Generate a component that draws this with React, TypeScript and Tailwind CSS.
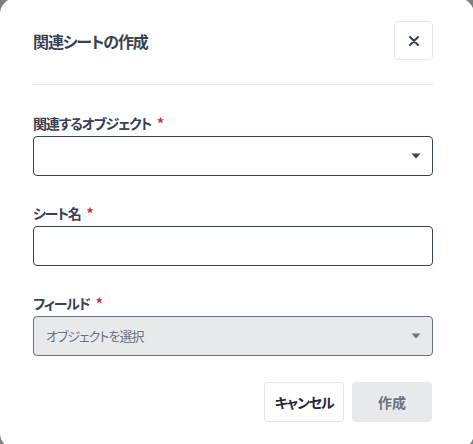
const jp = "font-['Noto_Sans_CJK_JP',sans-serif] [font-feature-settings:'palt']";

function Caret({ color }: { color: string }) {
  return (
    <svg width="10" height="6" viewBox="0 0 10 6" className="shrink-0">
      <path d="M0.5 0.5 L9.5 0.5 L5 5.5 Z" fill={color} />
    </svg>
  );
}

function Label({ text }: { text: string }) {
  return (
    <div className="mb-[3px] flex h-[20px] items-center text-[14px] font-bold leading-[20px] text-[#374151]">
      <span className="tracking-[-1.2px]">{text}</span>
      <span className="ml-[6px] text-[#dc2626]">*</span>
    </div>
  );
}

export default function App() {
  return (
    <div className={`h-[444px] w-[473px] overflow-hidden bg-[#7f7f7f] ${jp}`}>
      <div className="-mt-[2px] h-[451px] w-[474px] rounded-2xl bg-white pl-[33px] pr-[41px] pt-[23px]">
        <div className="flex items-center justify-between pb-[24px]">
          <h2 className="text-[16px] font-bold leading-6 tracking-[-1.1px] text-[#374151]">関連シートの作成</h2>
          <button className="flex h-[39px] w-[39px] items-center justify-center rounded border border-[#e5e7eb] bg-white">
            <svg width="10" height="10" viewBox="0 0 10 10">
              <path d="M1 1 L9 9 M9 1 L1 9" stroke="#374151" strokeWidth="2" strokeLinecap="round" />
            </svg>
          </button>
        </div>
        <div className="h-px bg-[#e5e7eb]" />

        <div className="mt-[28px]">
          <Label text="関連するオブジェクト" />
          <div className="flex h-[40px] items-center justify-between rounded border border-[#374151] bg-white pl-3 pr-[11px]">
            <span />
            <Caret color="#374151" />
          </div>
        </div>

        <div className="mt-[27px]">
          <Label text="シート名" />
          <div className="h-[40px] rounded border border-[#374151] bg-white" />
        </div>

        <div className="mt-[27px]">
          <Label text="フィールド" />
          <div className="flex h-[40px] items-center justify-between rounded border border-[#6b7280] bg-[#e8e9eb] pl-[12px] pr-[11px]">
            <span className="text-[13px] tracking-[-1px] text-[#6b7280]">オブジェクトを選択</span>
            <Caret color="#6b7280" />
          </div>
        </div>

        <div className="mt-[26px] flex justify-end gap-2 pr-px">
          <button className="h-[40px] w-[80px] rounded border border-[#e5e7eb] bg-white text-[14px] font-bold tracking-[-1.2px] text-[#1f2937]">
            キャンセル
          </button>
          <button className="h-[40px] w-[80px] rounded bg-[#e8e9eb] text-[14px] font-bold text-[#6b7280]">
            作成
          </button>
        </div>
      </div>
    </div>
  );
}
